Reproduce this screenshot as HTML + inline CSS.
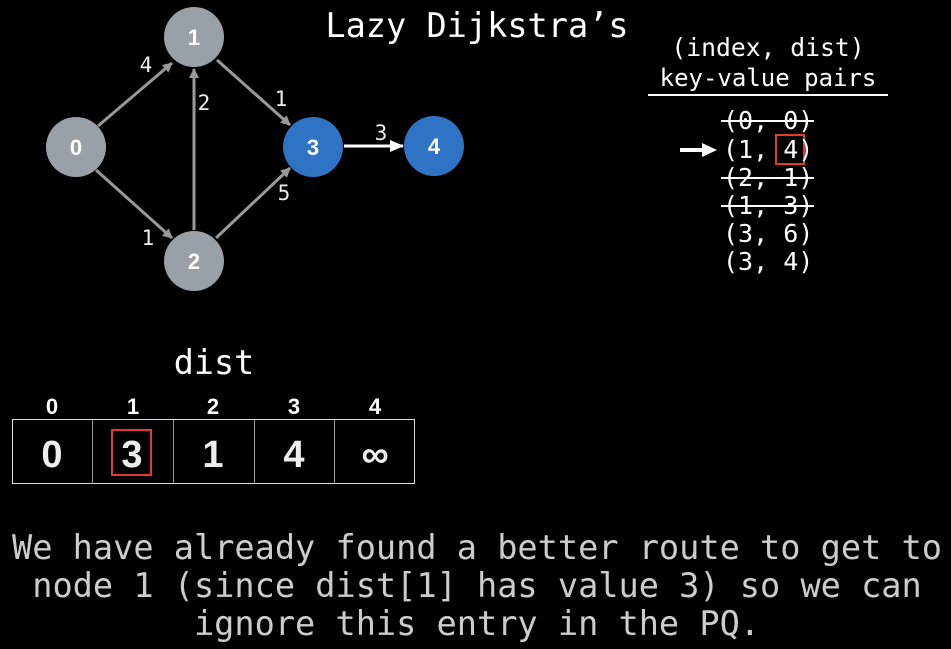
<!DOCTYPE html>
<html><head><meta charset="utf-8"><style>
body{margin:0;width:951px;height:649px;background:#000;overflow:hidden;position:relative}
</style></head><body>
<svg width="951" height="649" style="position:absolute;left:0;top:0">
<defs>
<marker id="ag" markerWidth="10" markerHeight="10" refX="9" refY="5" orient="auto" markerUnits="userSpaceOnUse"><path d="M0,0 L10,5 L0,10 z" fill="#999"/></marker>
<marker id="aw" markerWidth="14" markerHeight="12" refX="13" refY="6" orient="auto" markerUnits="userSpaceOnUse"><path d="M0,0 L14,6 L0,12 z" fill="#fff"/></marker>
</defs>
<g stroke="#999" stroke-width="3">
<line x1="98" y1="126" x2="172" y2="63" marker-end="url(#ag)"/>
<line x1="96" y1="170" x2="172" y2="238" marker-end="url(#ag)"/>
<line x1="194" y1="230" x2="194" y2="69" marker-end="url(#ag)"/>
<line x1="217" y1="60" x2="290" y2="125" marker-end="url(#ag)"/>
<line x1="216" y1="238" x2="290" y2="168" marker-end="url(#ag)"/>
</g>
<line x1="344" y1="146" x2="403" y2="146" stroke="#fff" stroke-width="3" marker-end="url(#aw)"/>
<circle cx="76" cy="147" r="30" fill="#9aa0a8"/>
<circle cx="194" cy="37" r="30" fill="#9aa0a8"/>
<circle cx="194" cy="261" r="30" fill="#9aa0a8"/>
<circle cx="313" cy="147" r="30" fill="#2f74c4"/>
<circle cx="434" cy="146" r="30" fill="#2f74c4"/>
<g font-family="Liberation Sans,sans-serif" font-weight="bold" font-size="22" fill="#fff" text-anchor="middle">
<text x="76" y="155">0</text><text x="194" y="45">1</text><text x="194" y="269">2</text><text x="313" y="155">3</text><text x="434" y="154">4</text>
</g>
<g font-family="DejaVu Sans Mono,monospace" font-size="21" fill="#eee" text-anchor="middle">
<text x="146" y="72">4</text><text x="204" y="110">2</text><text x="281" y="106">1</text><text x="284" y="200">5</text><text x="148" y="245">1</text><text x="381" y="140">3</text>
</g>
<line x1="648" y1="95" x2="888" y2="95" stroke="#fff" stroke-width="2"/>
<line x1="680" y1="150" x2="703" y2="150" stroke="#fff" stroke-width="4"/>
<path d="M702,143 L717,150 L702,157 z" fill="#fff"/>
<rect x="776" y="135" width="28" height="29" fill="none" stroke="#e03a2f" stroke-width="2"/>
<rect x="12.5" y="419.5" width="402" height="64" fill="none" stroke="#ddd" stroke-width="1"/>
<g stroke="#999"><line x1="92.5" y1="420" x2="92.5" y2="484"/><line x1="173.5" y1="420" x2="173.5" y2="484"/><line x1="254.5" y1="420" x2="254.5" y2="484"/><line x1="334.5" y1="420" x2="334.5" y2="484"/></g>
<rect x="112" y="430" width="39" height="45" fill="none" stroke="#e03a2f" stroke-width="2"/>
<g font-family="Liberation Sans,sans-serif" font-weight="bold" font-size="22" fill="#fff" text-anchor="middle">
<text x="52" y="414">0</text><text x="133" y="414">1</text><text x="213" y="414">2</text><text x="294" y="414">3</text><text x="375" y="414">4</text>
</g>
<g font-family="Liberation Sans,sans-serif" font-weight="bold" font-size="38" fill="#eee" text-anchor="middle">
<text x="52" y="467">0</text><text x="132" y="467">3</text><text x="213" y="467">1</text><text x="294" y="467">4</text><text x="375" y="467">∞</text>
</g>
<g font-family="DejaVu Sans Mono,monospace" fill="#fff" text-anchor="middle">
<text x="477" y="37" font-size="33.6">Lazy Dijkstra’s</text>
<text x="768" y="56" font-size="24.7">(index, dist)</text>
<text x="768" y="86" font-size="24">key-value pairs</text>
<text x="214" y="374" font-size="33.4">dist</text>
</g>
<g font-family="DejaVu Sans Mono,monospace" fill="#fff" font-size="25">
<text x="723" y="129">(0, 0)</text>
<text x="723" y="158">(1, 4)</text>
<text x="723" y="186">(2, 1)</text>
<text x="723" y="214">(1, 3)</text>
<text x="723" y="242">(3, 6)</text>
<text x="723" y="270">(3, 4)</text>
</g>
<g stroke="#fff" stroke-width="2"><line x1="721" y1="121" x2="814" y2="121"/><line x1="721" y1="178" x2="814" y2="178"/><line x1="721" y1="206" x2="814" y2="206"/></g>
<g font-family="DejaVu Sans Mono,monospace" fill="#ccc" font-size="33.6" text-anchor="middle">
<text x="477" y="559">We have already found a better route to get to</text>
<text x="477" y="597">node 1 (since dist[1] has value 3) so we can</text>
<text x="477" y="635">ignore this entry in the PQ.</text>
</g>
</svg>
</body></html>
